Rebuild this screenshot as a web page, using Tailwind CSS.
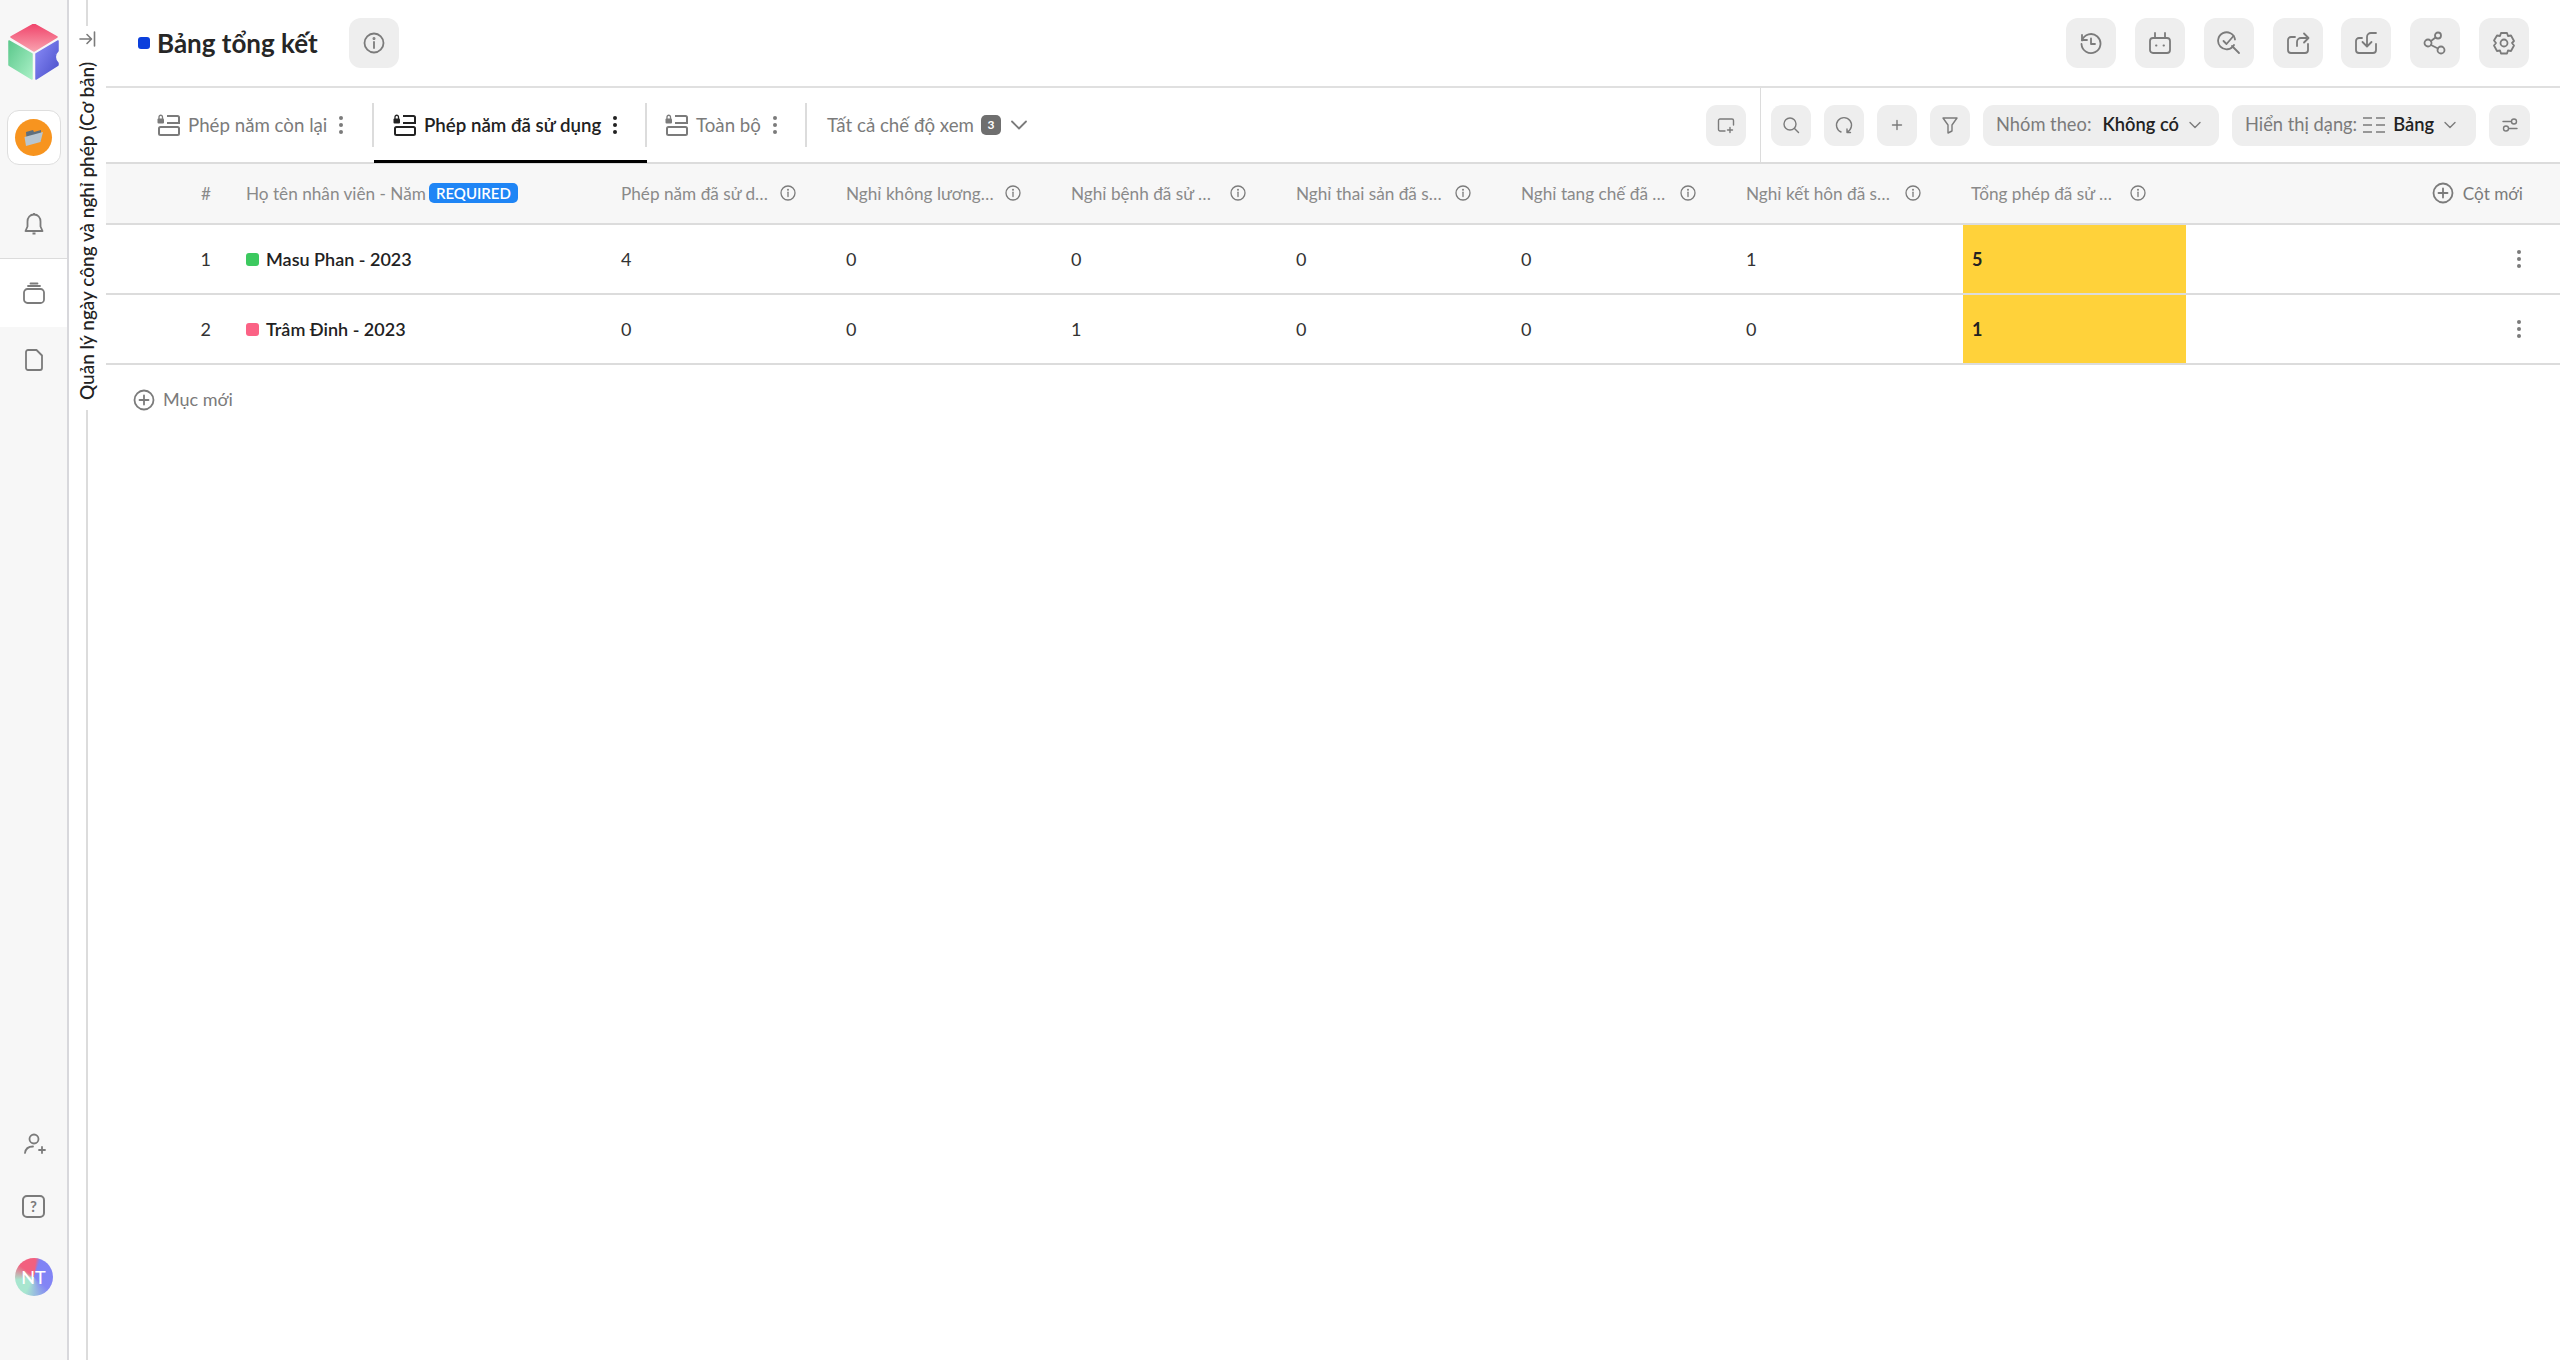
<!DOCTYPE html>
<html lang="en">
<head>
  <meta charset="UTF-8" />
  <title>Bảng tổng kết</title>
  <script src="https://cdn.jsdelivr.net/npm/@tailwindcss/browser@4"></script>
</head>
<body class="bg-white text-[#222] font-['Lato','Noto_Sans',sans-serif] overflow-hidden">
<div class="flex h-[1360px] w-[2560px]">

  <!-- left sidebar -->
  <aside class="w-[69px] shrink-0 bg-[#f7f7f7] border-r-2 border-[#d8d8dc] flex flex-col items-center text-[#7b7b7b]">
    <svg class="mt-[24px] ml-[1px]" width="52" height="56" viewBox="0 0 52 56">
      <defs>
        <linearGradient id="top" x1="0" y1="0" x2="0" y2="1"><stop offset="0" stop-color="#f0456b"/><stop offset="1" stop-color="#f9a0ae"/></linearGradient>
        <linearGradient id="lft" x1="0" y1="0" x2="1" y2="1"><stop offset="0" stop-color="#5cc88c"/><stop offset="1" stop-color="#a9f0c6"/></linearGradient>
        <linearGradient id="rgt" x1="0" y1="0" x2="1" y2="1"><stop offset="0" stop-color="#8a8cf8"/><stop offset="1" stop-color="#4a4fc9"/></linearGradient>
      </defs>
      <path d="M26 0 L49 13 L26 27 L3 13 Z" fill="url(#top)" stroke="url(#top)" stroke-width="1.5" stroke-linejoin="round"/>
      <path d="M1 17 L24 30 L24 55 L1 41 Z" fill="url(#lft)" stroke="url(#lft)" stroke-width="1.5" stroke-linejoin="round"/>
      <path d="M28 30 L50 17 L50 27 A8 8 0 0 0 50 39 L50 41 L28 55 Z" fill="url(#rgt)" stroke="url(#rgt)" stroke-width="1.5" stroke-linejoin="round"/>
    </svg>

    <div class="mt-[30px] w-[54px] h-[55px] bg-white border border-[#dedede] rounded-[12px] flex items-center justify-center">
      <div class="w-[37px] h-[37px] rounded-full bg-[#f7941f] flex items-center justify-center">
        <svg width="20" height="18" viewBox="0 0 20 18">
          <path d="M2 3 L9 1 L10 3 L17 1 L17 12 L3 16 Z" fill="#5f6f7c"/>
          <path d="M0.5 8 L19 3 L16.500 13 L2 17 Z" fill="#b8c6d0"/>
        </svg>
      </div>
    </div>

    <div class="h-[93px] pt-[24px] w-full flex items-center justify-center">
      <svg width="20" height="24" viewBox="0 0 20 24" fill="none" stroke="#7b7b7b" stroke-width="1.800" stroke-linejoin="round"><path d="M10 2.500c-4 0-6.500 3-6.500 7v5L1.500 19h17l-2-4.500v-5c0-4-2.500-7-6.500-7Z"/><path d="M8.500 21.500h3M10 1v1.500"/></svg>
    </div>

    <div class="h-[69px] w-full bg-white border-t border-[#dcdcdc] flex items-center justify-center">
      <svg width="22" height="22" viewBox="0 0 22 22" fill="none" stroke="#7b7b7b" stroke-width="1.800"><rect x="1" y="7" width="20" height="14" rx="3.500"/><path d="M5 4h12M7.500 1.500h7" stroke-linecap="round"/></svg>
    </div>

    <div class="h-[66px] w-full flex items-center justify-center">
      <svg width="18" height="22" viewBox="0 0 18 22" fill="none" stroke="#7b7b7b" stroke-width="1.800" stroke-linejoin="round"><path d="M3 1h8.500L17 6.500V19a2 2 0 0 1-2 2H3a2 2 0 0 1-2-2V3a2 2 0 0 1 2-2Z"/></svg>
    </div>

    <div class="mt-auto mb-[64px] flex flex-col items-center">
      <svg class="ml-[2px]" width="22" height="22" viewBox="0 0 22 22" fill="none" stroke="#7b7b7b" stroke-width="1.800" stroke-linecap="round"><circle cx="10" cy="6" r="4.500"/><path d="M1 20c.5-4 3.500-6.500 8-6.500M15 17h6M18 14v6"/></svg>
      <div class="mt-[40px] w-[23px] h-[23px] border-2 border-[#7b7b7b] rounded-[5px] flex items-center justify-center text-[15px] font-bold leading-none text-[#7b7b7b]">?</div>
      <div class="mt-[40px] w-[38px] h-[38px] rounded-full bg-[conic-gradient(from_20deg,#7f82f5_0deg,#8385f5_110deg,#a8e6cf_190deg,#a8e6cf_240deg,#f2607f_290deg,#f2607f_345deg,#7f82f5_360deg)] text-white text-[18px] font-medium flex items-center justify-center">NT</div>
    </div>
  </aside>

  <!-- collapsed panel with rotated title -->
  <div class="w-[37px] shrink-0 relative">
    <div class="absolute left-[17px] top-0 bottom-0 w-[2px] bg-[#dcdcdc]"></div>
    <div class="absolute left-[6px] top-[26px] h-[384px] w-[24px] bg-white flex flex-col items-center">
      <svg class="mt-[5px]" width="17" height="16" viewBox="0 0 17 16" fill="none" stroke="#7b7b7b" stroke-width="1.600" stroke-linecap="round" stroke-linejoin="round"><path d="M1 8h11M8 3.500 12.500 8 8 12.500M15.500 1v14"/></svg>
      <div class="mt-[15px] [writing-mode:vertical-rl] rotate-180 whitespace-nowrap text-[19px] leading-[24px] font-medium text-[#222]">Quản lý ngày công và nghỉ phép (Cơ bản)</div>
    </div>
  </div>

  <!-- main -->
  <main class="flex-1 min-w-0 flex flex-col">
    <header class="h-[88px] border-b-2 border-[#e0e0e0] flex items-center pl-[32px] pr-[31px]">
      <span class="w-[12px] h-[12px] rounded-[3px] bg-[#0b3fdc]"></span>
      <h1 class="ml-[7px] text-[26px] font-bold text-[#262626]">Bảng tổng kết</h1>
      <button class="ml-[31px] w-[50px] h-[50px] rounded-[12px] bg-[#eeeeee] flex items-center justify-center">
        <svg width="22" height="22" viewBox="0 0 22 22" fill="none" stroke="#7b7b7b" stroke-width="1.800" stroke-linecap="round"><circle cx="11" cy="11" r="9.500"/><path d="M11 10v6"/><circle cx="11" cy="6.500" r=".6"/></svg>
      </button>
      <div class="ml-auto flex gap-[18.800px]" id="topActions"></div>
    </header>

    <div class="h-[76px] flex items-stretch border-b-2 border-[#dcdcdc]">
      <div id="tabs" class="flex items-stretch"></div>
      <div class="ml-[20px] flex items-center text-[18.700px] text-[#7b7b7b]">
        <span>Tất cả chế độ xem</span>
        <span class="ml-[7px] w-[20px] h-[20px] rounded-[5px] bg-[#6f6f6f] text-white text-[12px] font-bold flex items-center justify-center">3</span>
        <svg class="ml-[10px]" width="16" height="10" viewBox="0 0 16 10" fill="none" stroke="#7b7b7b" stroke-width="1.800" stroke-linecap="round" stroke-linejoin="round"><path d="M1 1.500 8 8.500l7-7"/></svg>
      </div>
      <div class="ml-auto flex items-center pr-[30px] gap-[13px]" id="tools"></div>
    </div>

    <div id="table"></div>

    <div class="flex items-center ml-[27px] mt-[21px] text-[18px] text-[#7b7b7b]">
      <svg width="22" height="22" viewBox="0 0 22 22" fill="none" stroke="#7b7b7b" stroke-width="1.800" stroke-linecap="round"><circle cx="11" cy="11" r="9.500"/><path d="M11 6.500v9M6.500 11h9"/></svg>
      <span class="ml-[8px]">Mục mới</span>
    </div>
  </main>
</div>

<script>
  const infoIcon = `<svg width="16" height="16" viewBox="0 0 16 16" fill="none" stroke="#7b7b7b" stroke-width="1.300" stroke-linecap="round"><circle cx="8" cy="8" r="7"/><path d="M8 7.200v4.300"/><circle cx="8" cy="4.700" r=".4"/></svg>`;
  const kebab = (color) => `<svg width="6" height="20" viewBox="0 0 6 20" fill="${color}"><circle cx="3" cy="3" r="2"/><circle cx="3" cy="10" r="2"/><circle cx="3" cy="17" r="2"/></svg>`;
  const tabIcon = (color) => `<svg width="23" height="22" viewBox="0 0 23 22" fill="none" stroke="${color}" stroke-width="2"><rect x="2" y="13" width="20" height="8" rx="1.500"/><path d="M10 2h10.500a1.500 1.500 0 0 1 1.500 1.500V9H10"/><rect x="0.500" y="4.500" width="6.500" height="5" rx="1" fill="${color}" stroke="none"/><path d="M2 5V3a1.700 1.700 0 0 1 3.500 0v2" stroke-width="1.300"/></svg>`;

  // top right buttons
  const topIcons = [
    `<path d="M3 4v5h5"/><path d="M3 9.500A9.500 9.500 0 1 1 2.500 13"/><path d="M12 7.500V13h4"/>`,
    `<rect x="2" y="7" width="20" height="15" rx="3"/><path d="M7 7V2M17 7V2"/><path d="M8 14.500h.5M15.500 14.500h.5"/>`,
    `<path d="M18 8.500A8.500 8.500 0 1 0 17 14"/><path d="m6.500 10 3 3 7-8M15 15l7 7"/>`,
    `<path d="M9 6H5a3 3 0 0 0-3 3v10a3 3 0 0 0 3 3h14a3 3 0 0 0 3-3v-6"/><path d="M11 15v-4a4 4 0 0 1 4-4h7M18 2.500 22.500 7 18 11.500"/>`,
    `<path d="M8 7H5a3 3 0 0 0-3 3v9a3 3 0 0 0 3 3h14a3 3 0 0 0 3-3v-6"/><path d="M22 2h-5a4 4 0 0 0-4 4v9M8.500 11l4.500 4.500L17.500 11"/>`,
    `<circle cx="5" cy="12" r="3.500"/><circle cx="15" cy="4.500" r="3"/><circle cx="18" cy="19" r="3.500"/><path d="m8 10 4.500-3.500M8 14l7 3.500"/>`,
    `<path d="M9 2h6l1 3 3-.5 3 5.500-2 2 2 2.500-3 5.500-3-.5-1 3H9l-1-3-3 .5L2 14.500 4 12 2 9.500 5 4.500 8 5Z"/><circle cx="12" cy="12" r="3.500"/>`,
  ];
  document.getElementById("topActions").innerHTML = topIcons.map(d => `
    <button class="w-[50px] h-[50px] rounded-[12px] bg-[#eeeeee] flex items-center justify-center">
      <svg width="24" height="24" viewBox="0 0 24 24" fill="none" stroke="#7b7b7b" stroke-width="1.800" stroke-linecap="round" stroke-linejoin="round">${d}</svg>
    </button>`).join('');

  // tabs
  const tabs = [
    { name: "Phép năm còn lại", box: "w-[268px] pl-[51px]", active: false },
    { name: "Phép năm đã sử dụng", box: "w-[273px] pl-[19px]", active: true },
    { name: "Toàn bộ", box: "w-[160px] pl-[18px]", active: false },
  ];
  document.getElementById("tabs").innerHTML = tabs.map(t => `
    <div class="${t.box} relative flex items-center after:absolute after:right-0 after:top-[15px] after:h-[44px] after:w-[2px] after:bg-[#dcdcdc]">
      ${tabIcon(t.active ? "#222222" : "#7b7b7b")}
      <span class="ml-[8px] mr-[11px] whitespace-nowrap text-[18.700px] ${t.active ? 'font-semibold text-[#222]' : 'text-[#7b7b7b]'}">${t.name}</span>
      ${kebab(t.active ? "#222222" : "#7b7b7b")}
      ${t.active ? '<div class="absolute left-0 right-0 -bottom-[1px] h-[3px] bg-black"></div>' : ''}
    </div>`).join('');

  // toolbar
  const toolBtn = (inner) => `<button class="w-[40px] h-[41px] rounded-[11px] bg-[#eeeeee] flex items-center justify-center shrink-0">
    <svg width="18" height="18" viewBox="0 0 18 18" fill="none" stroke="#7b7b7b" stroke-width="1.400" stroke-linecap="round" stroke-linejoin="round">${inner}</svg></button>`;
  const chevron = `<svg class="ml-[10px]" width="12" height="8" viewBox="0 0 12 8" fill="none" stroke="#7b7b7b" stroke-width="1.400" stroke-linecap="round" stroke-linejoin="round"><path d="M1 1.500 6 6.500l5-5"/></svg>`;
  document.getElementById("tools").innerHTML = `
    ${toolBtn('<path d="M8 15H3a1.500 1.500 0 0 1-1.500-1.500v-9A1.500 1.500 0 0 1 3 3h12a1.500 1.500 0 0 1 1.500 1.500V9M13 11.500v5M10.500 14h5"/>')}
    <div class="self-stretch w-[1px] bg-[#dcdcdc] ml-[1px] -mr-[3px]"></div>
    ${toolBtn('<circle cx="8" cy="8" r="6"/><path d="m12.500 12.500 4 4"/>')}
    ${toolBtn('<path d="M6 16A7.500 7.500 0 1 1 12 16M12 13v3.500h3.500"/>')}
    ${toolBtn('<path d="M9 4.500v9M4.500 9h9"/>')}
    ${toolBtn('<path d="M2 2h14L11 9v6l-4 2V9Z"/>')}
    <div class="h-[41px] w-[236px] rounded-[11px] bg-[#eeeeee] flex items-center pl-[13px] text-[18.300px] text-[#7b7b7b] whitespace-nowrap">
      <span>Nhóm theo:</span><span class="ml-[11px] font-semibold text-[#222]">Không có</span>${chevron}
    </div>
    <div class="h-[41px] w-[244px] rounded-[11px] bg-[#eeeeee] flex items-center pl-[13px] text-[18.300px] text-[#7b7b7b] whitespace-nowrap">
      <span>Hiển thị dạng:</span>
      <svg class="mx-[6px]" width="22" height="18" viewBox="0 0 22 18" stroke="#7b7b7b" stroke-width="1.600"><path d="M0 2h9M13 2h9M0 9h9M13 9h9M0 16h9M13 16h9"/></svg>
      <span class="ml-[2px] font-semibold text-[#222]">Bảng</span>${chevron}
    </div>
    <button class="w-[41px] h-[41px] rounded-[11px] bg-[#eeeeee] flex items-center justify-center shrink-0">
      <svg width="18" height="18" viewBox="0 0 18 18" fill="none" stroke="#7b7b7b" stroke-width="1.400" stroke-linecap="round"><path d="M2 5.500h8M8 12.500h8"/><circle cx="13" cy="5.500" r="2.500"/><circle cx="5" cy="12.500" r="2.500"/></svg>
    </button>
  `;

  // table
  const columns = ["Phép năm đã sử d…", "Nghỉ không lương…", "Nghỉ bệnh đã sử …", "Nghỉ thai sản đã s…", "Nghỉ tang chế đã …", "Nghỉ kết hôn đã s…", "Tổng phép đã sử …"];
  const rows = [
    { id: 1, name: "Masu Phan - 2023", dot: "bg-[#3cc95f]", values: [4, 0, 0, 0, 0, 1, 5] },
    { id: 2, name: "Trâm Đinh - 2023", dot: "bg-[#fb6285]", values: [0, 0, 1, 0, 0, 0, 1] },
  ];

  const headerCells = columns.map(c => `
    <div class="w-[225px] shrink-0 pl-[8px] flex items-center">
      <span class="w-[159px] whitespace-nowrap">${c}</span>${infoIcon}
    </div>`).join('');

  const bodyRows = rows.map(r => `
    <div class="h-[70px] flex items-center border-b-2 border-[#dcdcdc] text-[18px]">
      <div class="w-[105px] shrink-0 text-right text-[#333]">${r.id}</div>
      <div class="w-[402px] pl-[35px] shrink-0 flex items-center font-semibold text-[#222]">
        <span class="w-[13px] h-[13px] rounded-[3px] ${r.dot} mr-[7px]"></span>${r.name}
      </div>
      ${r.values.map((v, i) => i === 6
        ? `<div class="w-[223px] h-full pl-[9px] bg-[#ffd23a] font-bold flex items-center">${v}</div>`
        : `<div class="w-[225px] shrink-0 pl-[8px] text-[#333]">${v}</div>`).join('')}
      <div class="ml-auto mr-[38px] flex">${kebab("#7b7b7b")}</div>
    </div>`).join('');

  document.getElementById("table").innerHTML = `
    <div class="h-[61px] bg-[#f7f7f7] border-b-2 border-[#dcdcdc] flex items-center text-[17.200px] text-[#8a8a8a]">
      <div class="w-[105px] shrink-0 text-right">#</div>
      <div class="w-[402px] pl-[35px] flex items-center shrink-0">
        <span>Họ tên nhân viên - Năm</span>
        <span class="ml-[3px] px-[7px] h-[20px] rounded-[5px] bg-[#1f85f5] text-white text-[15px] font-semibold flex items-center">REQUIRED</span>
      </div>
      ${headerCells}
      <div class="ml-auto mr-[37px] flex items-center text-[#7b7b7b]">
        <svg width="22" height="22" viewBox="0 0 22 22" fill="none" stroke="#7b7b7b" stroke-width="1.800" stroke-linecap="round"><circle cx="11" cy="11" r="9.500"/><path d="M11 6.500v9M6.500 11h9"/></svg>
        <span class="ml-[9px]">Cột mới</span>
      </div>
    </div>
    ${bodyRows}`;
</script>
</body>
</html>
